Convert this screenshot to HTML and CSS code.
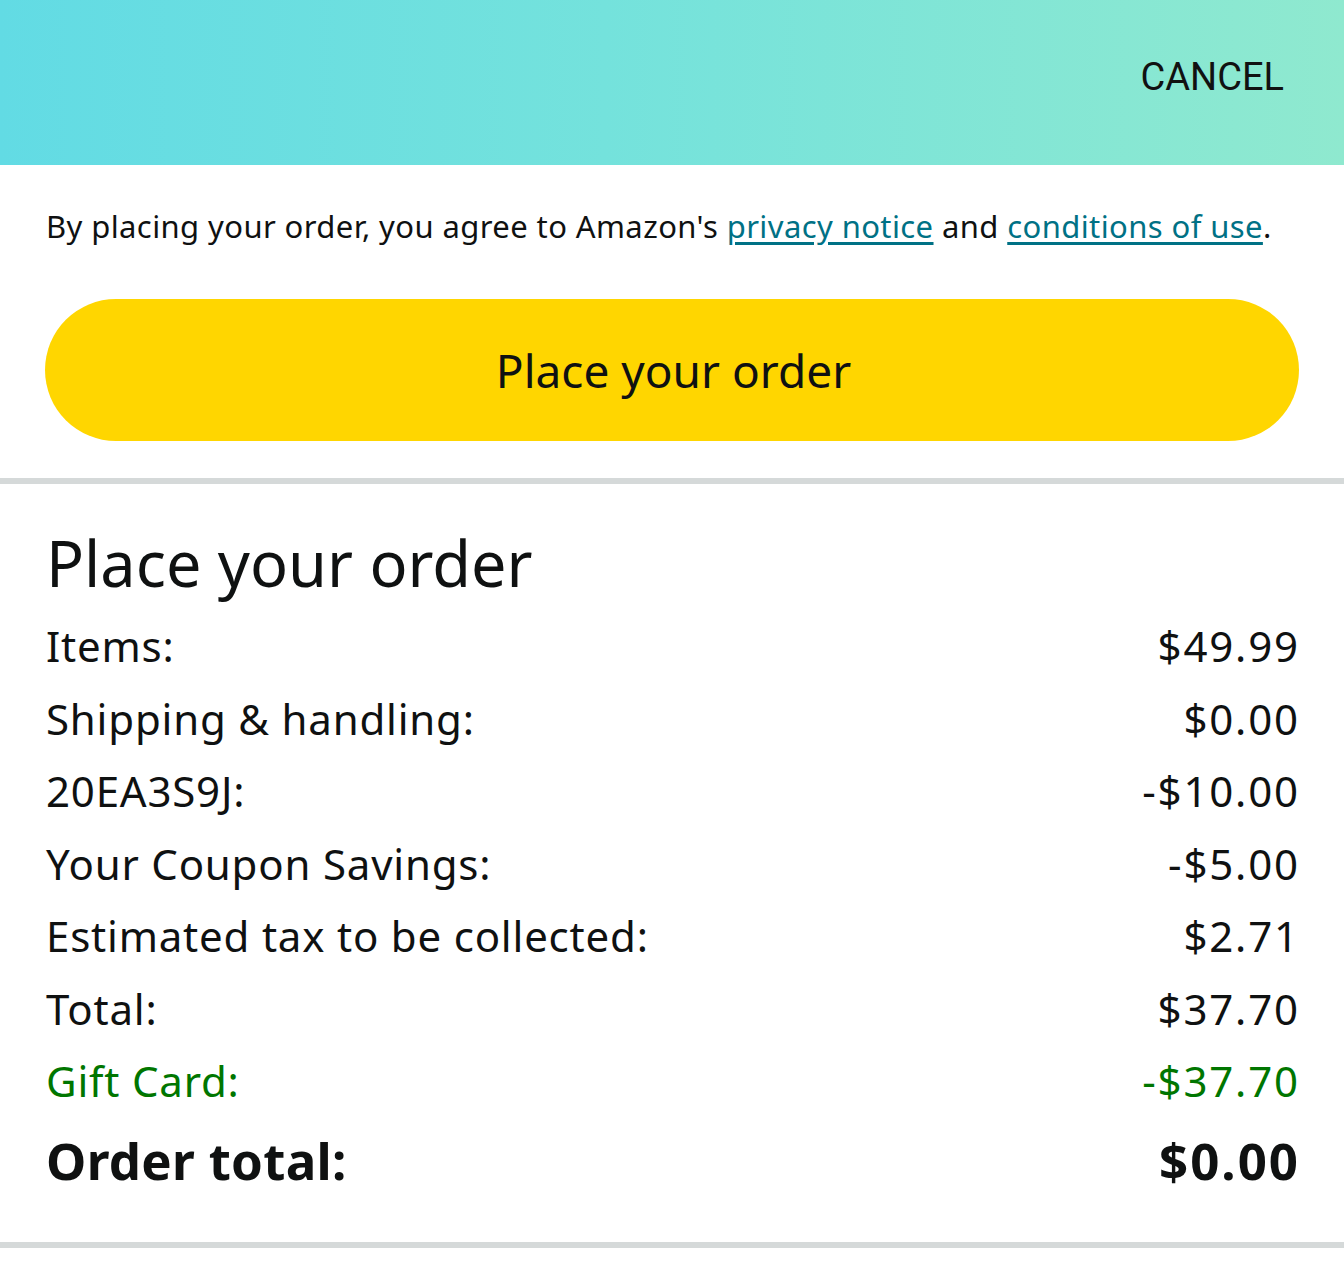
FILE: index.html
```html
<!DOCTYPE html>
<html lang="en">
<head>
<meta charset="utf-8">
<title>Place your order</title>
<link rel="stylesheet" href="styles.css">
</head>
<body>
<header class="topbar">
  <span class="cancel">CANCEL</span>
</header>
<section class="agree">
  <p class="agree-text">By placing your order, you agree to Amazon's <a class="link" href="#">privacy notice</a> and <a class="link" href="#">conditions of use</a>.</p>
  <button class="place-btn" type="button">Place your order</button>
</section>
<div class="divider"></div>
<section class="summary">
  <h1 class="summary-title">Place your order</h1>
  <div class="rows">
    <div class="row"><span class="label">Items:</span><span class="value">$49.99</span></div>
    <div class="row"><span class="label">Shipping &amp; handling:</span><span class="value">$0.00</span></div>
    <div class="row"><span class="label">20EA3S9J:</span><span class="value">-$10.00</span></div>
    <div class="row"><span class="label">Your Coupon Savings:</span><span class="value">-$5.00</span></div>
    <div class="row"><span class="label">Estimated tax to be collected:</span><span class="value">$2.71</span></div>
    <div class="row"><span class="label">Total:</span><span class="value">$37.70</span></div>
    <div class="row row-green"><span class="label">Gift Card:</span><span class="value">-$37.70</span></div>
    <div class="row row-total"><span class="label">Order total:</span><span class="value">$0.00</span></div>
  </div>
</section>
<div class="divider divider-bottom"></div>
</body>
</html>
```

FILE: styles.css
```css
* { box-sizing: border-box; }
html, body { margin: 0; padding: 0; background: #fff; }
body {
  font-family: "Noto Sans", "Open Sans", sans-serif;
  color: #0F1111;
  width: 1344px;
}
.topbar {
  height: 165px;
  background: linear-gradient(to right, #62dbe4 0%, #74e2dc 45%, #8fe9cf 100%);
  display: flex;
  justify-content: flex-end;
  align-items: flex-start;
  padding: 55px 60px 0 0;
}
.cancel {
  font-family: Roboto, "Liberation Sans", sans-serif;
  font-size: 38px;
  line-height: 45px;
  color: #111;
}
.agree {
  padding: 41px 45px 37px 45px;
}
.agree-text {
  margin: 0 0 53px 1px;
  font-size: 31px;
  line-height: 40px;
  letter-spacing: 0.4px;
}
.link {
  color: #007185;
  text-decoration: underline;
  text-decoration-thickness: 3px;
  text-underline-offset: 4px;
}
.place-btn {
  display: flex;
  align-items: center;
  justify-content: center;
  width: 100%;
  height: 142px;
  border: none;
  border-radius: 71px;
  background: #FFD600;
  font-family: "Noto Sans", sans-serif;
  font-size: 46px;
  color: #0F1111;
  padding: 0 0 0 3px;
}
.divider {
  height: 6px;
  background: #D5D9D9;
}
.summary {
  padding: 43px 46px 50px 46px;
}
.summary-title {
  margin: 0 0 11px 0;
  font-size: 63px;
  font-weight: 400;
  line-height: 72px;
}
.rows {
  display: flex;
  flex-direction: column;
}
.row {
  display: flex;
  justify-content: space-between;
  font-size: 42px;
  line-height: 72.5px;
}
.label { letter-spacing: 0.8px; }
.value { letter-spacing: 1.8px; margin-right: -1.8px; }
.row-green { color: #007600; }
.row-total {
  font-size: 51px;
  font-weight: 700;
  line-height: 64px;
  margin-top: 10px;
}
.row-total .label { letter-spacing: 0.3px; }
.row-total .value { letter-spacing: 2px; margin-right: -2px; }
```
